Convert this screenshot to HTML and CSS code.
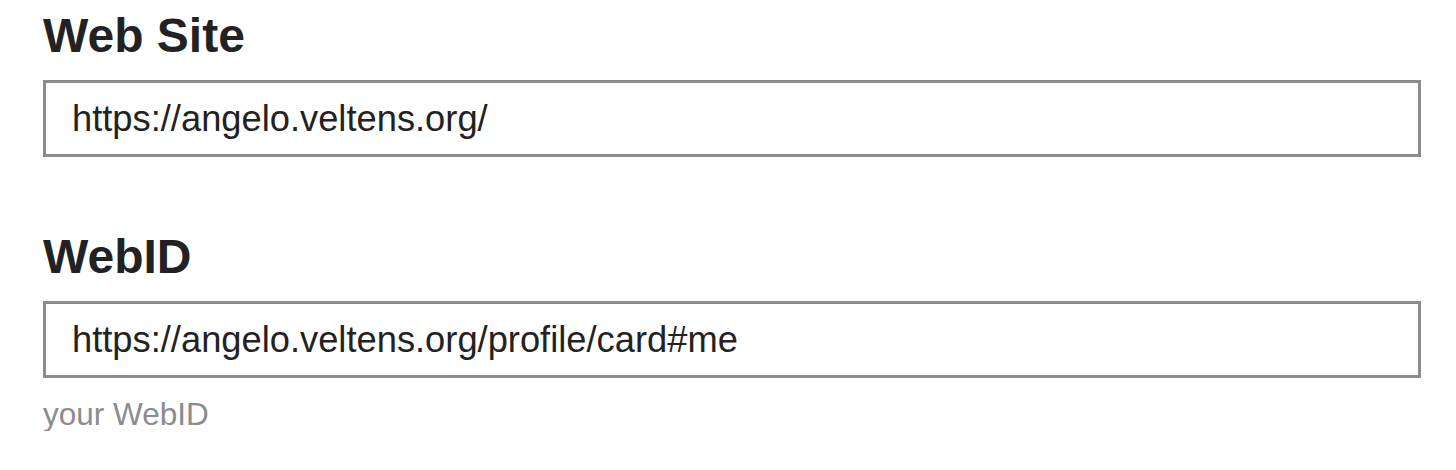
FILE: index.html
```html
<!DOCTYPE html>
<html>
<head>
<meta charset="utf-8">
<link rel="stylesheet" href="styles.css">
</head>
<body>
<form class="form">
  <div class="field">
    <label class="label" for="website">Web Site</label>
    <input class="input" id="website" type="text" value="https://angelo.veltens.org/">
  </div>
  <div class="field">
    <label class="label" for="webid">WebID</label>
    <input class="input" id="webid" type="text" value="https://angelo.veltens.org/profile/card#me">
    <div class="hint">your WebID</div>
  </div>
</form>
</body>
</html>
```
FILE: styles.css
```css
html, body {
  margin: 0;
  padding: 0;
  background: #fff;
}
body {
  font-family: "Liberation Sans", Arial, sans-serif;
  color: #222;
}
.form {
  padding: 8px 35px 0 43px;
  display: flex;
  flex-direction: column;
  gap: 72px;
}
.field {
  display: flex;
  flex-direction: column;
}
.label {
  font-weight: bold;
  font-size: 48px;
  line-height: 55px;
  margin-bottom: 17px;
  color: #222;
}
.input {
  box-sizing: border-box;
  height: 77px;
  width: 100%;
  border: 3px solid #8c8c8c;
  border-radius: 0;
  padding: 0 26px;
  font-family: "Liberation Sans", Arial, sans-serif;
  font-size: 36.3px;
  color: #222;
  background: #fff;
  outline: none;
  margin: 0;
}
.hint {
  margin-top: 19px;
  font-size: 31.5px;
  line-height: 34px;
  color: #8c8c8c;
}
```
